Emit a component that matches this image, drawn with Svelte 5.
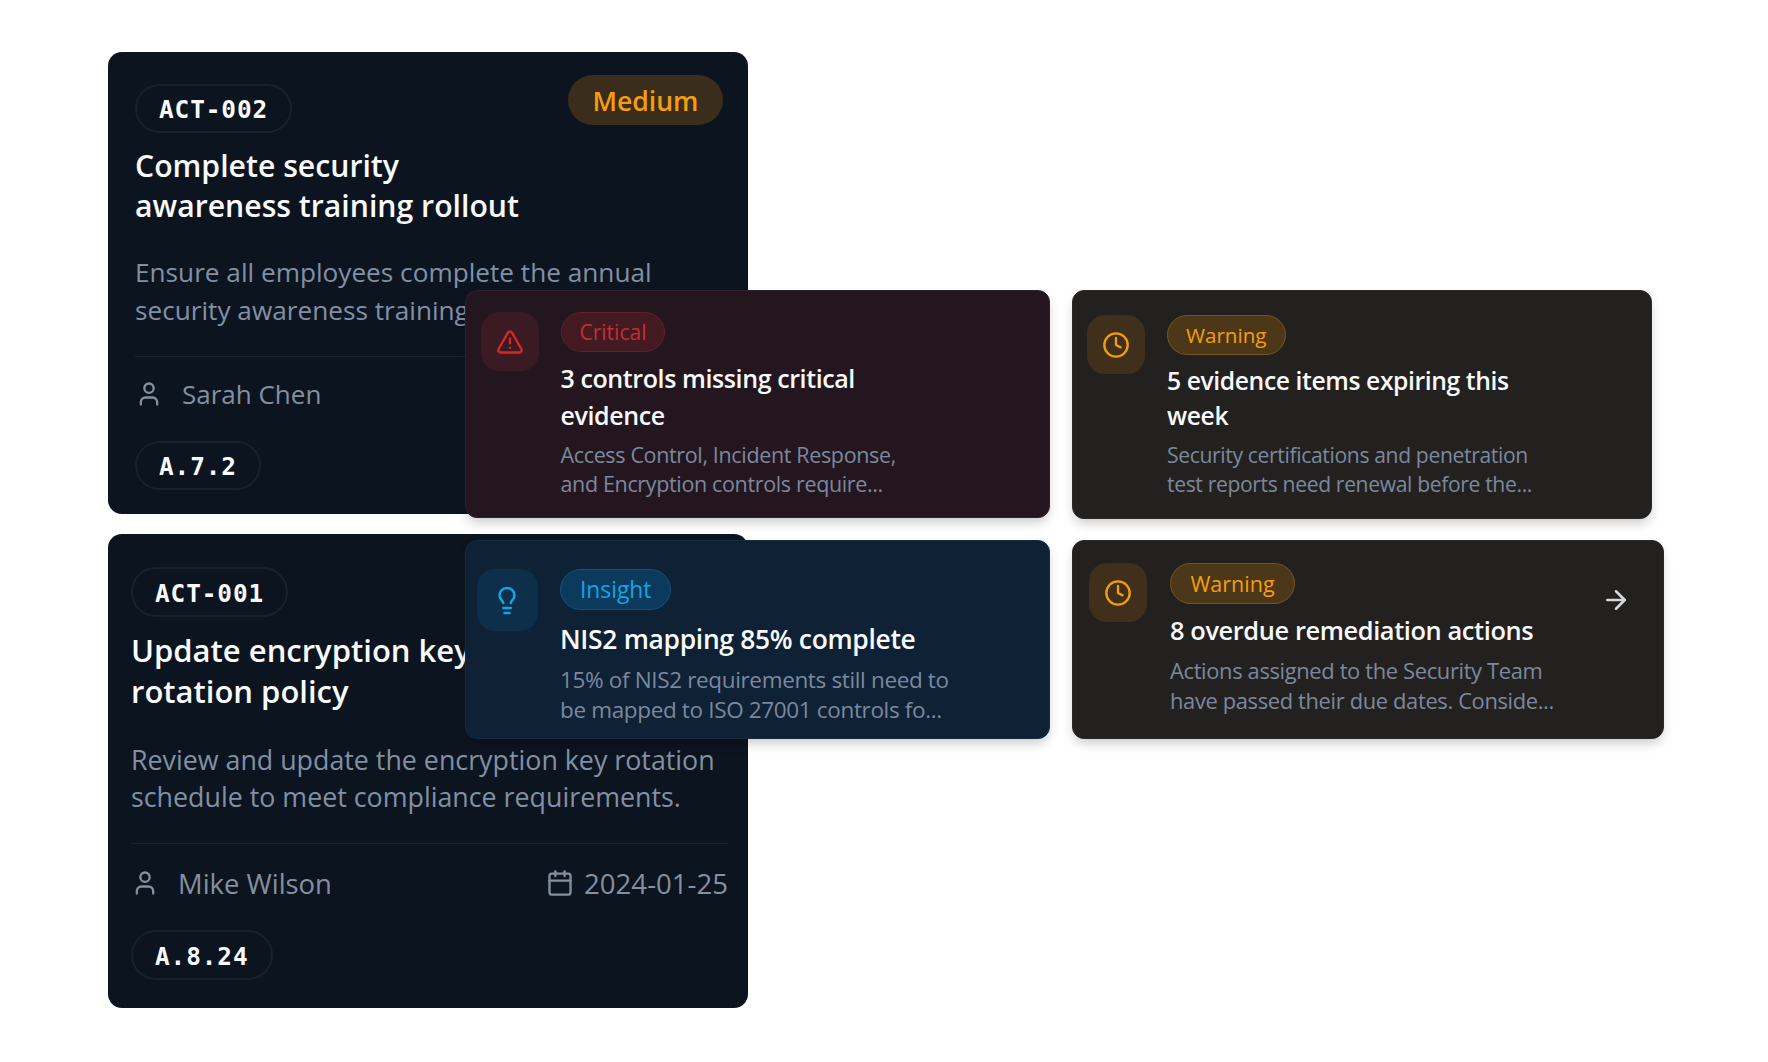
<script>
  const alerts = [
    { id: 'a1', tone: 'critical', icon: 'alert', badge: 'Critical', title: ['3 controls missing critical', 'evidence'], desc: ['Access Control, Incident Response,', 'and Encryption controls require...'] },
    { id: 'a2', tone: 'warning', icon: 'clock', badge: 'Warning', title: ['5 evidence items expiring this', 'week'], desc: ['Security certifications and penetration', 'test reports need renewal before the...'] },
    { id: 'a3', tone: 'insight', icon: 'bulb', badge: 'Insight', title: ['NIS2 mapping 85% complete'], desc: ['15% of NIS2 requirements still need to', 'be mapped to ISO 27001 controls fo...'] },
    { id: 'a4', tone: 'warning', icon: 'clock', badge: 'Warning', title: ['8 overdue remediation actions'], desc: ['Actions assigned to the Security Team', 'have passed their due dates. Conside...'], arrow: true }
  ];
</script>

<div class="stage">
  <article class="card c1">
    <div class="top">
      <span class="pill mono">ACT-002</span>
      <span class="prio">Medium</span>
    </div>
    <h2><span>Complete security</span><span>awareness training rollout</span></h2>
    <p class="desc"><span>Ensure all employees complete the annual</span><span>security awareness training</span></p>
    <div class="meta">
      <span class="who">
        <svg viewBox="0 0 24 24"><path d="M19 21v-2a4 4 0 0 0-4-4H9a4 4 0 0 0-4 4v2"/><circle cx="12" cy="7" r="4"/></svg>
        Sarah Chen
      </span>
    </div>
    <span class="pill mono ctl">A.7.2</span>
  </article>

  <article class="card c2">
    <div class="top">
      <span class="pill mono">ACT-001</span>
    </div>
    <h2><span>Update encryption key</span><span>rotation policy</span></h2>
    <p class="desc"><span>Review and update the encryption key rotation</span><span>schedule to meet compliance requirements.</span></p>
    <div class="meta">
      <span class="who">
        <svg viewBox="0 0 24 24"><path d="M19 21v-2a4 4 0 0 0-4-4H9a4 4 0 0 0-4 4v2"/><circle cx="12" cy="7" r="4"/></svg>
        Mike Wilson
      </span>
      <span class="when">
        <svg viewBox="0 0 24 24"><path d="M8 2v4"/><path d="M16 2v4"/><rect x="3" y="4" width="18" height="18" rx="2"/><path d="M3 10h18"/></svg>
        2024-01-25
      </span>
    </div>
    <span class="pill mono ctl">A.8.24</span>
  </article>

  {#each alerts as a}
    <article class="alert {a.id} {a.tone}">
      <div class="ico">
        {#if a.icon === 'alert'}
          <svg viewBox="0 0 24 24"><path d="m21.730 18-8-14a2 2 0 0 0-3.480 0l-8 14A2 2 0 0 0 4 21h16a2 2 0 0 0 1.730-3"/><path d="M12 9v4"/><path d="M12 17h.01"/></svg>
        {:else if a.icon === 'clock'}
          <svg viewBox="0 0 24 24"><circle cx="12" cy="12" r="10"/><path d="M12 6v6l4 2"/></svg>
        {:else}
          <svg viewBox="0 0 24 24"><path d="M15 14c.2-1 .7-1.700 1.500-2.500 1-.9 1.500-2.200 1.500-3.500A6 6 0 0 0 6 8c0 1 .2 2.200 1.500 3.500.7.7 1.300 1.500 1.500 2.500"/><path d="M9 18h6"/><path d="M10 22h4"/></svg>
        {/if}
      </div>
      <div class="body">
        <span class="badge">{a.badge}</span>
        <h3>{#each a.title as t}<span>{t}</span>{/each}</h3>
        <p>{#each a.desc as d}<span>{d}</span>{/each}</p>
      </div>
      {#if a.arrow}
        <svg class="arrow" viewBox="0 0 24 24"><path d="M5 12h14"/><path d="m12 5 7 7-7 7"/></svg>
      {/if}
    </article>
  {/each}
</div>

<style>
  :global(body) { margin: 0; background: #fff; }
  .stage { position: relative; width: 1768px; height: 1062px; overflow: hidden; font-family: "Open Sans", "Noto Sans", sans-serif; }
  svg { fill: none; stroke: currentColor; stroke-width: 2; stroke-linecap: round; stroke-linejoin: round; flex: none; }
  h2, h3, p { margin: 0; }
  h2 span, h3 span, p span { display: block; white-space: nowrap; }

  .card { position: absolute; left: 108px; width: 640px; box-sizing: border-box; background: #0c1420; border-radius: 14px; display: flex; flex-direction: column; align-items: flex-start; }
  .c1 { top: 52px; height: 462px; padding: 32px 25px 24px 27px; }
  .c2 { top: 534px; height: 474px; padding: 33px 20px 28px 23px; }
  .top { display: flex; justify-content: space-between; align-items: flex-start; align-self: stretch; }
  .pill { display: inline-flex; align-items: center; height: 49px; box-sizing: border-box; padding: 2px 22px 0; border: 2px solid #182130; border-radius: 25px; color: #f8fafc; }
  .c2 .pill { height: 50px; }
  .mono { font-family: "DejaVu Sans Mono", monospace; font-weight: 700; font-size: 24.400px; letter-spacing: 0.9px; }
  .prio { margin-top: -9px; height: 50px; box-sizing: border-box; padding: 1px 24.500px 0; display: inline-flex; align-items: center; border-radius: 25px; background: #3a2d1c; color: #f59e0b; font-size: 26.600px; font-weight: 600; }
  h2 { color: #f8fafc; font-weight: 600; font-size: 30.200px; line-height: 40px; margin-top: 13px; }
  .c2 h2 { font-size: 31px; line-height: 41px; margin-top: 13px; }
  .desc { color: #8290a4; font-size: 26.200px; line-height: 37.500px; margin-top: 28px; }
  .c2 .desc { font-size: 26.800px; margin-top: 28.500px; }
  .meta { align-self: stretch; display: flex; justify-content: space-between; align-items: center; border-top: 1px solid #1b2433; margin-top: 27px; padding-top: 17px; height: 39px; color: #84909f; font-size: 26px; }
  .c2 .meta { font-size: 27.400px; margin-top: 27.500px; padding-top: 19.500px; }
  .who, .when { display: inline-flex; align-items: center; }
  .who svg { width: 28px; height: 28px; margin-right: 19px; }
  .when svg { width: 28px; height: 28px; margin-right: 10px; }
  .when { font-size: 27.600px; }
  .ctl { margin-top: 28px; }
  .c2 .ctl { margin-top: 27.500px; }

  .alert { position: absolute; box-sizing: border-box; display: flex; align-items: flex-start; border: 1px solid; border-radius: 12px; box-shadow: 0 6px 12px -2px rgba(0,0,0,.22); }
  .a1 { left: 464.500px; top: 290px; width: 585px; height: 228px; padding: 21px 15px; }
  .a2 { left: 1072px; top: 290px; width: 580px; height: 229px; padding: 24px 14px; }
  .a3 { left: 464.500px; top: 540px; width: 585px; height: 199px; padding: 28px 11px; }
  .a4 { left: 1072px; top: 540px; width: 592px; height: 199px; padding: 22px 16px; }
  .critical { background: #24161f; border-color: #2f2029; --c: #dc2626; --ib: #3a1a23; --bb: #431a22; --bd: #5e2229; --bc: #c42f33; }
  .warning { background: #232120; border-color: #2c2a29; --c: #f59e0b; --ib: #3f2f1b; --bb: #4d3719; --bd: #7a5518; --bc: #f59e0b; }
  .insight { background: #0e2135; border-color: #172b40; --c: #0ea5e9; --ib: #0d2f4a; --bb: #0c3a5c; --bd: #0b5583; --bc: #0ea5e9; }
  .ico { width: 58px; height: 59px; border-radius: 18px; background: var(--ib); color: var(--c); display: flex; align-items: center; justify-content: center; flex: none; }
  .ico svg { width: 28px; height: 28px; }
  .a3 .ico { width: 61px; height: 62px; }
  .a3 .ico svg { width: 30px; height: 33px; }
  .body { margin-left: 22px; display: flex; flex-direction: column; align-items: flex-start; flex: 1; }
  .a2 .body { margin-left: 22px; }
  .a3 .body { margin-left: 22.500px; }
  .a4 .body { margin-left: 23px; }
  .badge { display: inline-flex; align-items: center; height: 40px; box-sizing: border-box; padding: 0 18px; border: 1px solid var(--bd); border-radius: 21px; background: var(--bb); color: var(--bc); font-size: 21px; }
  .a2 .badge { font-size: 20.600px; }
  .a3 .badge { height: 41px; font-size: 22.800px; padding: 0 19px; }
  .a4 .badge { height: 41px; font-size: 21.500px; padding: 0 19.500px; }
  h3 { color: #f8fafc; font-weight: 600; font-size: 25px; line-height: 36.500px; margin-top: 8px; letter-spacing: -0.4px; }
  .a2 h3 { font-size: 24.700px; line-height: 35.500px; margin-top: 7.500px; }
  .a3 h3 { font-size: 26.400px; letter-spacing: -0.3px; margin-top: 11px; }
  .a4 h3 { font-size: 25.400px; margin-top: 8px; }
  .alert p { color: #7c889e; font-size: 21.500px; line-height: 29px; margin-top: 7px; letter-spacing: -0.35px; }
  .a2 p { font-size: 21.100px; margin-top: 6px; }
  .a3 p { line-height: 30.500px; font-size: 22.500px; margin-top: 7px; }
  .a4 p { line-height: 30.500px; font-size: 21.900px; }
  .arrow { position: absolute; left: 528px; top: 44px; width: 30px; height: 30px; color: #d6d8db; }
</style>
